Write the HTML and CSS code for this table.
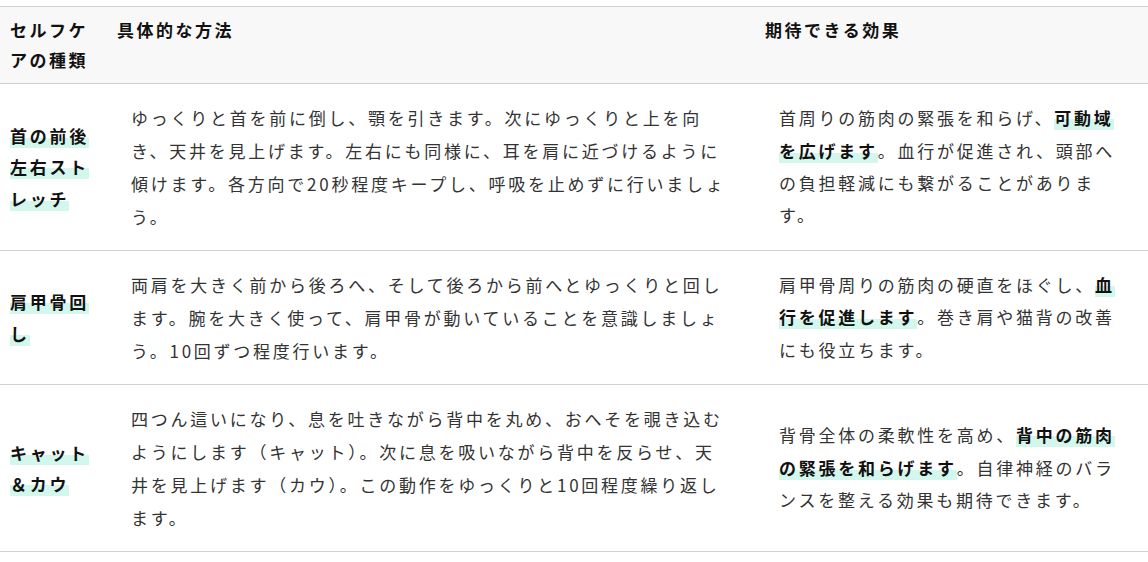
FILE: index.html
```html
<!DOCTYPE html>
<html lang="ja">
<head>
<meta charset="utf-8">
<link rel="stylesheet" href="styles.css">
</head>
<body>
<div class="wrap">
<table class="care">
<colgroup><col class="c1"><col class="c2"><col class="c3"></colgroup>
<thead>
<tr><th>セルフケアの種類</th><th>具体的な方法</th><th>期待できる効果</th></tr>
</thead>
<tbody>
<tr>
<th class="name"><span class="mark">首の前後左右ストレッチ</span></th>
<td>ゆっくりと首を前に倒し、顎を引きます。次にゆっくりと上を向き、天井を見上げます。左右にも同様に、耳を肩に近づけるように傾けます。各方向で20秒程度キープし、呼吸を止めずに行いましょう。</td>
<td>首周りの筋肉の緊張を和らげ、<strong class="mark">可動域を広げます</strong>。血行が促進され、頭部への負担軽減にも繋がることがあります。</td>
</tr>
<tr>
<th class="name"><span class="mark">肩甲骨回し</span></th>
<td>両肩を大きく前から後ろへ、そして後ろから前へとゆっくりと回します。腕を大きく使って、肩甲骨が動いていることを意識しましょう。10回ずつ程度行います。</td>
<td>肩甲骨周りの筋肉の硬直をほぐし、<strong class="mark">血行を促進します</strong>。巻き肩や猫背の改善にも役立ちます。</td>
</tr>
<tr>
<th class="name"><span class="mark">キャット＆カウ</span></th>
<td>四つん這いになり、息を吐きながら背中を丸め、おへそを覗き込むようにします（キャット）。次に息を吸いながら背中を反らせ、天井を見上げます（カウ）。この動作をゆっくりと10回程度繰り返します。</td>
<td>背骨全体の柔軟性を高め、<strong class="mark">背中の筋肉の緊張を和らげます</strong>。自律神経のバランスを整える効果も期待できます。</td>
</tr>
</tbody>
</table>
</div>
</body>
</html>
```
FILE: styles.css
```css
html, body {
  margin: 0;
  padding: 0;
  background: #fff;
}
.wrap {
  padding-top: 6px;
}
.care {
  width: 1148px;
  table-layout: fixed;
  border-collapse: collapse;
  font-family: "Noto Sans CJK JP", "Noto Sans", sans-serif;
  font-size: 17px;
  letter-spacing: 2.75px;
  color: #333;
}
.c1 { width: 107px; }
.c2 { width: 648px; }
.c3 { width: 393px; }
.care thead th {
  background: #f8f8f8;
  border-top: 1px solid #d0d0d0;
  border-bottom: 1px solid #d0d0d0;
  padding: 8px 10px;
  line-height: 30px;
  text-align: left;
  vertical-align: top;
  font-weight: 700;
  color: #111;
  letter-spacing: 2.5px;
}
.care tbody th.name {
  padding: 17px 10px;
  text-align: left;
  vertical-align: middle;
  font-weight: 700;
  color: #111;
  line-height: 31.5px;
  border-bottom: 1px solid #d0d0d0;
}
.care tbody td {
  padding: 17px 24px;
  line-height: 33px;
  vertical-align: middle;
  border-bottom: 1px solid #d0d0d0;
}
.care tbody td:last-child {
  line-height: 32.4px;
}
.mark {
  background: linear-gradient(transparent 58%, #d3f7ec 58%);
}
strong.mark {
  font-weight: 700;
  color: #111;
}
```
